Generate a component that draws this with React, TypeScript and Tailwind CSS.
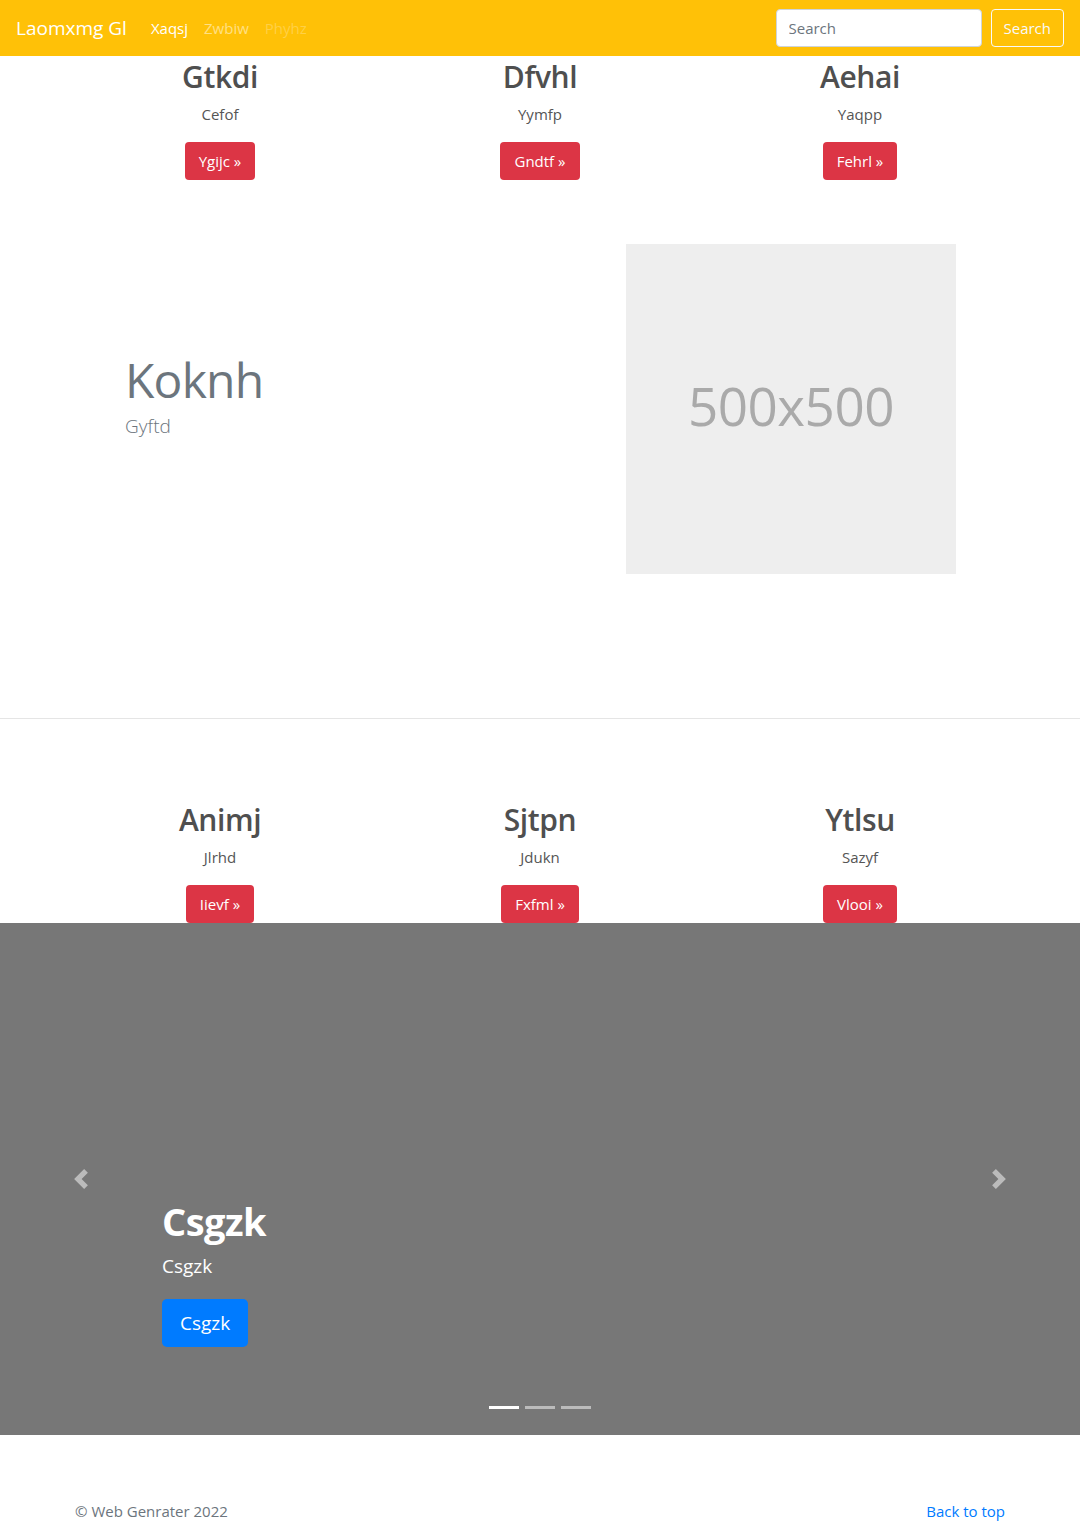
import React from 'react';

const font = { fontFamily: '"Open Sans", "Noto Sans", "Liberation Sans", sans-serif' };

type Item = { title: string; text: string; action: string };

const topRow: Item[] = [
  { title: 'Gtkdi', text: 'Cefof', action: 'Ygijc' },
  { title: 'Dfvhl', text: 'Yymfp', action: 'Gndtf' },
  { title: 'Aehai', text: 'Yaqpp', action: 'Fehrl' },
];

const bottomRow: Item[] = [
  { title: 'Animj', text: 'Jlrhd', action: 'Iievf' },
  { title: 'Sjtpn', text: 'Jdukn', action: 'Fxfml' },
  { title: 'Ytlsu', text: 'Sazyf', action: 'Vlooi' },
];

function Column({ item }: { item: Item }) {
  return (
    <div className="flex flex-col items-center text-center">
      <h2 className="text-[30px] leading-[38px] font-semibold text-[#4f4f4f] tracking-[-0.4px]">{item.title}</h2>
      <p className="mt-[6px] text-[15px] leading-6 text-[#555]">{item.text}</p>
      <button
        type="button"
        className="mt-[16px] h-[38px] px-[14px] rounded-[4px] bg-[#dc3545] text-white text-[15px] leading-6"
      >
        {item.action} &raquo;
      </button>
    </div>
  );
}

function Chevron({ dir }: { dir: 'left' | 'right' }) {
  return (
    <svg width="20" height="20" viewBox="0 0 8 8" className="opacity-50">
      {dir === 'left' ? (
        <path fill="#fff" d="M5.25 0l-4 4 4 4 1.5-1.5L4.25 4l2.5-2.5L5.25 0z" />
      ) : (
        <path fill="#fff" d="M2.75 0l-1.5 1.5L3.75 4l-2.5 2.5L2.75 8l4-4-4-4z" />
      )}
    </svg>
  );
}

export default function App() {
  return (
    <div className="w-[1080px] bg-white" style={font}>
      {/* barra di navigazione */}
      <nav className="h-14 bg-[#ffc107] flex items-center px-4">
        <span className="text-[19px] text-white mr-4">Laomxmg Gl</span>
        <a className="px-2 text-[15px] text-white">Xaqsj</a>
        <a className="px-2 text-[15px] text-white/50">Zwbiw</a>
        <a className="px-2 text-[15px] text-white/25">Phyhz</a>
        <div className="ml-auto flex items-center">
          <input
            type="text"
            placeholder="Search"
            className="w-[206px] h-[38px] px-3 rounded-[4px] border border-[#ced4da] bg-white text-[15px] text-[#495057] placeholder:text-[#6c757d] outline-none"
          />
          <button
            type="button"
            className="ml-[9px] h-[38px] px-3 rounded-[4px] border border-[#f8f9fa] text-[15px] text-[#f8f9fa]"
          >
            Search
          </button>
        </div>
      </nav>

      {/* prima fila di colonne */}
      <section className="w-[960px] mx-auto grid grid-cols-3 pt-[2px]">
        {topRow.map((item) => (
          <Column key={item.title} item={item} />
        ))}
      </section>

      {/* featurette */}
      <section className="w-[960px] mx-auto flex items-center justify-between pl-[65px] pr-[64px] pt-16 pb-[144px]">
        <div className="pb-[26px]">
          <h2 className="text-[48px] leading-[56px] text-[#6c757d] tracking-[-0.8px]">Koknh</h2>
          <p className="mt-[4px] text-[19px] leading-7 font-light text-[#6c757d]">Gyftd</p>
        </div>
        <div className="w-[330px] h-[330px] bg-[#eee] flex items-center justify-center">
          <span className="text-[53px] text-[#aaa] tracking-[-0.5px] -mt-[6px]">500x500</span>
        </div>
      </section>

      <hr className="border-0 border-t border-[#e5e5e5]" />

      {/* seconda fila di colonne */}
      <section className="w-[960px] mx-auto grid grid-cols-3 pt-[82px]">
        {bottomRow.map((item) => (
          <Column key={item.title} item={item} />
        ))}
      </section>

      {/* carosello */}
      <section className="relative h-[512px] bg-[#777]">
        <div className="absolute left-0 top-0 h-full w-[162px] flex items-center justify-center">
          <Chevron dir="left" />
        </div>
        <div className="absolute right-0 top-0 h-full w-[162px] flex items-center justify-center">
          <Chevron dir="right" />
        </div>
        <div className="absolute left-[162px] bottom-[88px] text-white">
          <h1 className="text-[38px] leading-[48px] font-bold tracking-[-0.5px]">Csgzk</h1>
          <p className="mt-[6px] text-[19px] leading-[30px]">Csgzk</p>
          <button
            type="button"
            className="mt-[18px] h-12 px-[18px] rounded-[5px] bg-[#007bff] text-[19px] text-white"
          >
            Csgzk
          </button>
        </div>
        <div className="absolute bottom-[26px] left-0 right-0 flex justify-center gap-[6px]">
          <span className="w-[30px] h-[3px] bg-white" />
          <span className="w-[30px] h-[3px] bg-white/50" />
          <span className="w-[30px] h-[3px] bg-white/50" />
        </div>
      </section>

      {/* piè di pagina */}
      <footer className="w-[960px] mx-auto px-[15px] pt-16 pb-6 flex justify-between text-[15px] leading-6">
        <p className="text-[#6c757d]">&copy; Web Genrater 2022</p>
        <a className="text-[#007bff]">Back to top</a>
      </footer>
    </div>
  );
}
